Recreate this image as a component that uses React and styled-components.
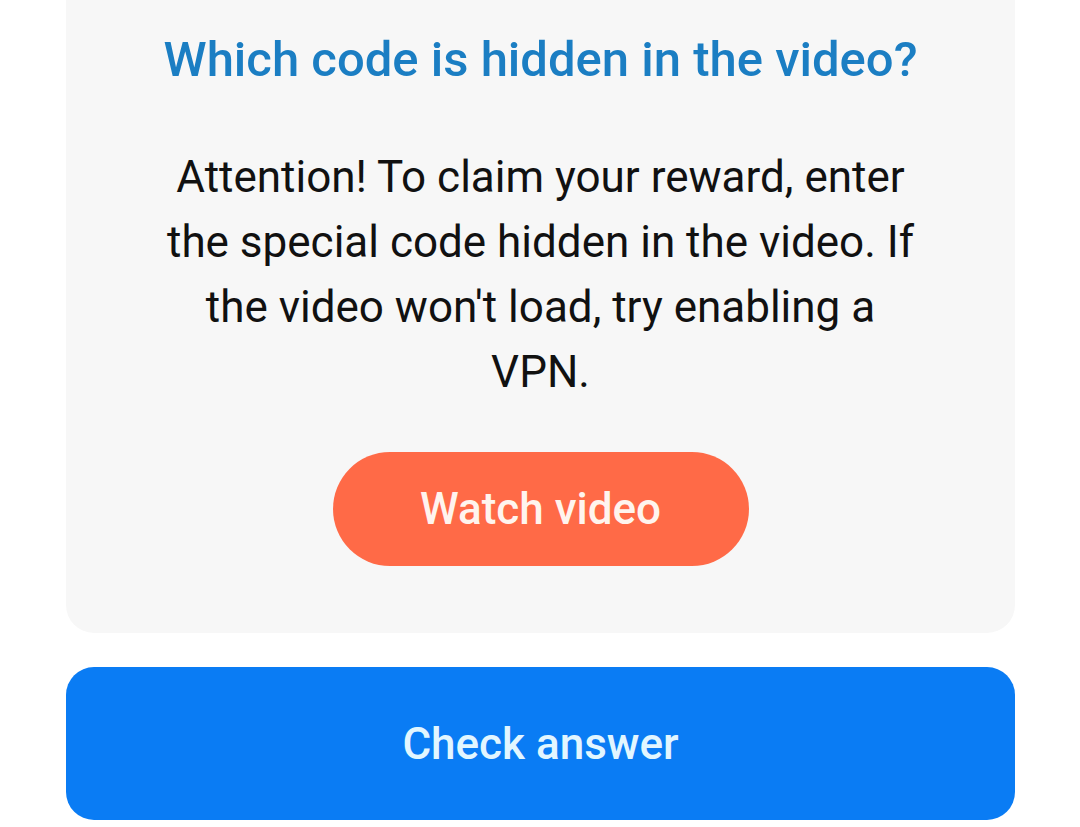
import styled, { createGlobalStyle } from "styled-components";

const GlobalStyle = createGlobalStyle`
    html, body {
        margin: 0;
        padding: 0;
        background: #ffffff;
        font-family: Roboto, "Liberation Sans", sans-serif;
    }
`

const Page = styled.div`
    display: flex;
    flex-direction: column;
    padding: 0 65px 0 66px;
    height: 827px;
    overflow: hidden;
    box-sizing: border-box;
`

const Card = styled.div`
    display: flex;
    flex-direction: column;
    align-items: center;
    margin-top: -28px;
    padding: 60px 40px 67px;
    background-color: #f7f7f7;
    border-radius: 28px;
`

const Title = styled.h1`
    margin: 0;
    font-size: 49px;
    line-height: 56px;
    font-weight: 500;
    color: #1b7ec3;
    text-align: center;
`

const Text = styled.p`
    margin: 57px 0 0;
    max-width: 775px;
    font-size: 44px;
    line-height: 65px;
    font-weight: 400;
    color: #111111;
    text-align: center;
`

const Button = styled.button`
    border: none;
    font-family: inherit;
    font-weight: 500;
    font-size: 44px;
    cursor: pointer;
    background-color: ${(p) => p.bg};
    color: ${(p) => p.fg};
    border-radius: ${(p) => p.radius};
`

const WatchButton = styled(Button)`
    margin-top: 47px;
    width: 416px;
    height: 114px;
`

const CheckButton = styled(Button)`
    margin-top: 34px;
    width: 100%;
    height: 153px;
`

const App = () => {
    return (
        <Page>
            <GlobalStyle />
            <Card>
                <Title>Which code is hidden in the video?</Title>
                <Text>
                    Attention! To claim your reward, enter the special code hidden in the video. If the video won't load, try enabling a VPN.
                </Text>
                <WatchButton bg="#ff6a47" fg="#fff4ee" radius="57px">Watch video</WatchButton>
            </Card>
            <CheckButton bg="#0a7cf4" fg="#e2f6ff" radius="28px">Check answer</CheckButton>
        </Page>
    );
};

export default App;
